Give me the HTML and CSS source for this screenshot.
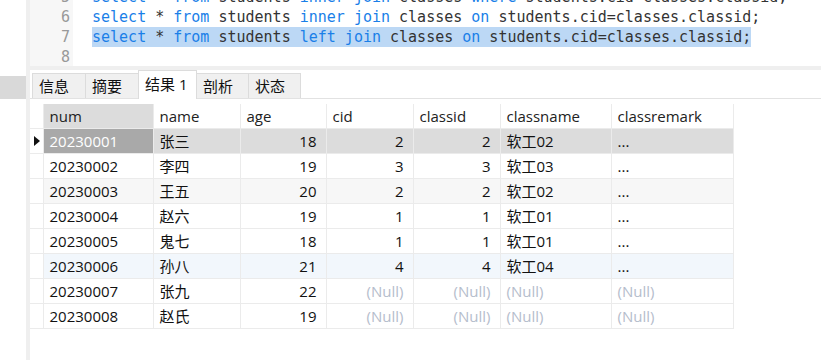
FILE: index.html
```html
<!DOCTYPE html>
<html lang="zh-CN">
<head>
    <meta charset="UTF-8">
    <title>Query Result</title>
    <link rel="stylesheet" href="styles.css">
</head>
<body>
    <div class="app">
        <div class="side">
            <div class="side-block"></div>
        </div>
        <div class="side-strip"></div>
        <div class="main">
            <div class="editor">
                <div class="gutter">
                    <div class="ln">5</div>
                    <div class="ln">6</div>
                    <div class="ln">7</div>
                    <div class="ln">8</div>
                </div>
                <div class="code">
                    <div class="line"><span class="kw">select</span> * <span class="kw">from</span> students <span class="kw">inner join</span> classes <span class="kw">where</span> students.cid=classes.classid;</div>
                    <div class="line"><span class="kw">select</span> * <span class="kw">from</span> students <span class="kw">inner join</span> classes <span class="kw">on</span> students.cid=classes.classid;</div>
                    <div class="line"><span class="sel"><span class="kw">select</span> * <span class="kw">from</span> students <span class="kw">left join</span> classes <span class="kw">on</span> students.cid=classes.classid;</span></div>
                    <div class="line"></div>
                </div>
            </div>
            <div class="band"></div>
            <div class="tabs">
                <div class="tab">信息</div>
                <div class="tab">摘要</div>
                <div class="tab active">结果 1</div>
                <div class="tab">剖析</div>
                <div class="tab">状态</div>
            </div>
            <table class="grid">
                <colgroup>
                    <col class="c-ind">
                    <col class="c-num">
                    <col class="c-name">
                    <col class="c-age">
                    <col class="c-cid">
                    <col class="c-classid">
                    <col class="c-classname">
                    <col class="c-remark">
                </colgroup>
                <thead>
                    <tr>
                        <th class="ind"></th>
                        <th class="cur-col">num</th>
                        <th>name</th>
                        <th>age</th>
                        <th>cid</th>
                        <th>classid</th>
                        <th>classname</th>
                        <th>classremark</th>
                    </tr>
                </thead>
                <tbody>
                    <tr class="selected">
                        <td class="ind"><span class="arrow"></span></td>
                        <td class="cur-cell">20230001</td><td>张三</td><td class="r">18</td><td class="r">2</td><td class="r">2</td><td>软工02</td><td>...</td>
                    </tr>
                    <tr>
                        <td class="ind"></td>
                        <td>20230002</td><td>李四</td><td class="r">19</td><td class="r">3</td><td class="r">3</td><td>软工03</td><td>...</td>
                    </tr>
                    <tr class="alt">
                        <td class="ind"></td>
                        <td>20230003</td><td>王五</td><td class="r">20</td><td class="r">2</td><td class="r">2</td><td>软工02</td><td>...</td>
                    </tr>
                    <tr>
                        <td class="ind"></td>
                        <td>20230004</td><td>赵六</td><td class="r">19</td><td class="r">1</td><td class="r">1</td><td>软工01</td><td>...</td>
                    </tr>
                    <tr>
                        <td class="ind"></td>
                        <td>20230005</td><td>鬼七</td><td class="r">18</td><td class="r">1</td><td class="r">1</td><td>软工01</td><td>...</td>
                    </tr>
                    <tr class="hover">
                        <td class="ind"></td>
                        <td>20230006</td><td>孙八</td><td class="r">21</td><td class="r">4</td><td class="r">4</td><td>软工04</td><td>...</td>
                    </tr>
                    <tr>
                        <td class="ind"></td>
                        <td>20230007</td><td>张九</td><td class="r">22</td><td class="r null">(Null)</td><td class="r null">(Null)</td><td class="null">(Null)</td><td class="null">(Null)</td>
                    </tr>
                    <tr>
                        <td class="ind"></td>
                        <td>20230008</td><td>赵氏</td><td class="r">19</td><td class="r null">(Null)</td><td class="r null">(Null)</td><td class="null">(Null)</td><td class="null">(Null)</td>
                    </tr>
                </tbody>
            </table>
        </div>
    </div>
</body>
</html>
```

FILE: styles.css
```css
body {
    margin: 0;
    width: 821px;
    height: 360px;
    overflow: hidden;
    background-color: #fff;
    font-family: "Open Sans", "Noto Sans CJK SC", sans-serif;
    font-size: 15px;
    color: #111;
}
.app {
    display: flex;
    height: 360px;
}
.side {
    width: 26px;
    flex-shrink: 0;
}
.side-block {
    margin-top: 76px;
    height: 23px;
    background-color: #d9d9d9;
}
.side-strip {
    width: 4px;
    flex-shrink: 0;
    background-color: #efefef;
}
.main {
    flex: 1;
    min-width: 0;
}

/* editor */
.editor {
    display: flex;
    align-items: flex-start;
    height: 66px;
    overflow: hidden;
    font-family: "DejaVu Sans Mono", monospace;
    font-size: 15px;
    line-height: 20px;
}
.gutter {
    width: 43px;
    height: 79px;
    flex-shrink: 0;
    background-color: #f7f7f7;
    color: #999;
    text-align: right;
    padding-right: 3px;
    box-sizing: border-box;
    margin-top: -13px;
}
.code {
    padding-left: 19px;
    margin-top: -13px;
    color: #333;
}
.line {
    height: 20px;
    white-space: pre;
}
.kw {
    color: #1a7fe8;
}
.sel {
    display: inline-block;
    height: 20px;
    vertical-align: top;
    background-color: #bcd8f5;
}
.band {
    height: 4px;
    background-color: #efefef;
}

/* tabs */
.tabs {
    display: flex;
    align-items: flex-end;
    height: 29px;
    padding-left: 2px;
    border-bottom: 1px solid #e2e2e2;
    box-sizing: border-box;
}
.tab {
    height: 25px;
    line-height: 25px;
    padding: 0 6px;
    box-sizing: border-box;
    background-color: #f0f0f0;
    border: 1px solid #dcdcdc;
    border-bottom: none;
    margin-right: -1px;
    font-size: 15px;
    color: #111;
    overflow: hidden;
}
.tab:nth-child(1),
.tab:nth-child(2) {
    width: 54px;
}
.tab:nth-child(4),
.tab:nth-child(5) {
    width: 53px;
}
.tab.active {
    width: 59px;
    height: 29px;
    line-height: 26px;
    background-color: #fff;
    margin-bottom: -1px;
}

/* result grid */
.grid {
    margin-top: 5px;
    border-collapse: collapse;
    table-layout: fixed;
    width: 703px;
}
.c-ind { width: 13px; }
.c-num { width: 110px; }
.c-name { width: 87px; }
.c-age { width: 86px; }
.c-cid { width: 87px; }
.c-classid { width: 87px; }
.c-classname { width: 111px; }
.c-remark { width: 122px; }
.grid th,
.grid td {
    height: 24px;
    line-height: 20px;
    padding: 0 9px 0 6px;
    border: 1px solid #ebebeb;
    text-align: left;
    font-weight: normal;
    white-space: nowrap;
    overflow: hidden;
}
.grid th {
    border-top: none;
    color: #222;
}
.grid .ind {
    padding: 0;
    border-left: none;
}
.grid td.r {
    text-align: right;
}
.grid th.cur-col {
    background-color: #dcdcdc;
}
.grid tr.selected td {
    background-color: #dcdcdc;
}
.grid tr.selected td.cur-cell {
    background-color: #a9a9a9;
    color: #fff;
}
.grid tr.alt td {
    background-color: #f7f7f7;
}
.grid tr.hover td {
    background-color: #f2f7fc;
}
.grid tr td.ind {
    background-color: #fff;
}
.grid td.null {
    color: #b5bdcc;
}
.arrow {
    display: block;
    width: 0;
    height: 0;
    margin-left: 4px;
    border-top: 5px solid transparent;
    border-bottom: 5px solid transparent;
    border-left: 6px solid #111;
}
```
